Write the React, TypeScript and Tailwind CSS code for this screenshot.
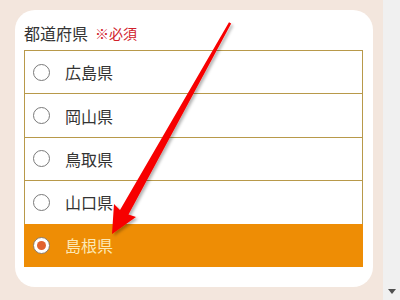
import React, { useState } from 'react';

const prefectures = ['広島県', '岡山県', '鳥取県', '山口県', '島根県'];

const Radio: React.FC<{ checked: boolean }> = ({ checked }) => (
  <span
    className={`flex h-[17px] w-[17px] shrink-0 items-center justify-center rounded-full border ${
      checked ? 'border-[#8a7a6a] bg-white' : 'border-[#7a7a7a] bg-white'
    }`}
  >
    {checked && <span className="h-[9px] w-[9px] rounded-full bg-[#e2622e]" />}
  </span>
);

const App: React.FC = () => {
  const [selected, setSelected] = useState('島根県');

  return (
    <div
      className="relative flex h-[300px] w-[400px] overflow-hidden"
      style={{ fontFamily: '"Noto Sans CJK JP", "Noto Sans", sans-serif' }}
    >
      {/* Page */}
      <div className="flex-1 bg-[#f3e6dd] pl-[15px] pt-[10px]">
        <div className="h-[277px] w-[358px] rounded-[20px] bg-white px-[9px]">
          {/* Label */}
          <div className="mb-[5px] flex items-center gap-[7px] pt-[11px] leading-[24px]">
            <span className="text-[16px] text-[#333]">都道府県</span>
            <span className="text-[14px] text-[#d0202a]">※必須</span>
          </div>

          {/* Options */}
          <div className="flex w-[339px] flex-col">
            {prefectures.map((name, i) => {
              const checked = selected === name;
              return (
                <button
                  key={name}
                  onClick={() => setSelected(name)}
                  className={`flex h-[43.4px] items-center gap-[15px] border-x border-t pl-[8px] text-left ${
                    i === prefectures.length - 1 ? 'border-b' : ''
                  } ${
                    checked
                      ? 'border-[#ee8d05] bg-[#ee8d05] text-[#fce8b4]'
                      : 'border-[#b8994a] bg-white text-[#333]'
                  }`}
                >
                  <Radio checked={checked} />
                  <span className="text-[16px] leading-none">{name}</span>
                </button>
              );
            })}
          </div>
        </div>
      </div>

      {/* Scrollbar */}
      <div className="flex w-[17px] flex-col items-center justify-end bg-[#f0f0f0] pb-[6px]">
        <svg width="8" height="5" viewBox="0 0 8 5">
          <path d="M0 0 H8 L4 5 Z" fill="#505050" />
        </svg>
      </div>

      {/* Red arrow annotation */}
      <svg
        className="pointer-events-none absolute left-0 top-0"
        width="400"
        height="300"
        viewBox="0 0 400 300"
      >
        <defs>
          <filter id="arrowShadow" x="-20%" y="-20%" width="140%" height="140%">
            <feDropShadow dx="2" dy="2" stdDeviation="1.5" floodColor="#000" floodOpacity="0.3" />
          </filter>
        </defs>
        <polygon
          points="229,22.3 231.2,23.6 128.5,214.5 136,217 112,234 114,204 120,210"
          fill="#f70000"
          filter="url(#arrowShadow)"
        />
      </svg>
    </div>
  );
};

export default App;
